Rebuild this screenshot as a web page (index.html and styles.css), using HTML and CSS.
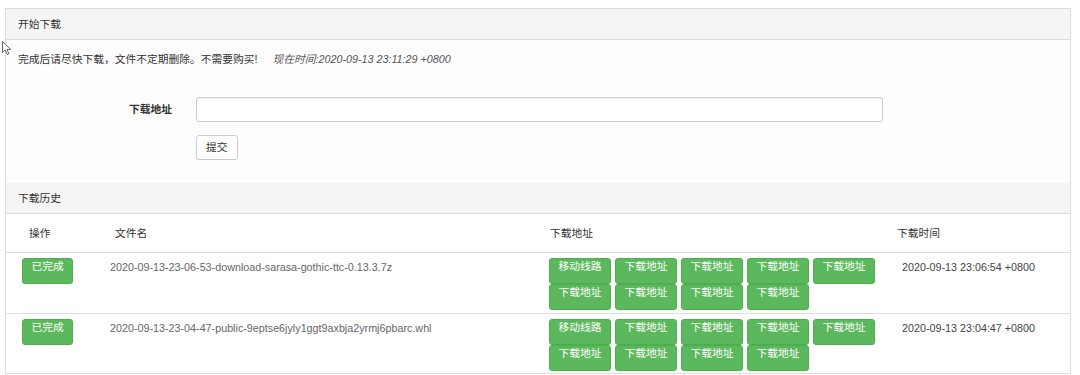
FILE: index.html
```html
<!DOCTYPE html>
<html lang="zh-CN">
<head>
<meta charset="utf-8">
<title>开始下载</title>
<link rel="stylesheet" href="styles.css">
</head>
<body>
<div class="panel">
  <div class="panel-heading">开始下载</div>
  <div class="panel-body">
    <p class="notice">完成后请尽快下载，文件不定期删除。不需要购买!<em class="now">现在时间:2020-09-13 23:11:29 +0800</em></p>
    <form class="form">
      <label class="form-label" for="url">下载地址</label>
      <input class="form-input" id="url" type="text">
      <button class="btn btn-default form-submit" type="button">提交</button>
    </form>
  </div>
  <div class="panel-heading panel-heading-sub">下载历史</div>
  <table class="history">
    <colgroup>
      <col class="c-op"><col class="c-name"><col class="c-links"><col class="c-time">
    </colgroup>
    <thead>
      <tr>
        <th class="th-op">操作</th>
        <th class="th-name">文件名</th>
        <th class="th-links">下载地址</th>
        <th class="th-time">下载时间</th>
      </tr>
    </thead>
    <tbody>
      <tr>
        <td class="td-op"><span class="btn btn-success">已完成</span></td>
        <td class="td-name">2020-09-13-23-06-53-download-sarasa-gothic-ttc-0.13.3.7z</td>
        <td class="td-links">
          <div class="links">
            <a class="btn btn-success">移动线路</a><a class="btn btn-success">下载地址</a><a class="btn btn-success">下载地址</a><a class="btn btn-success">下载地址</a><a class="btn btn-success">下载地址</a><a class="btn btn-success">下载地址</a><a class="btn btn-success">下载地址</a><a class="btn btn-success">下载地址</a><a class="btn btn-success">下载地址</a>
          </div>
        </td>
        <td class="td-time">2020-09-13 23:06:54 +0800</td>
      </tr>
      <tr class="last">
        <td class="td-op"><span class="btn btn-success">已完成</span></td>
        <td class="td-name">2020-09-13-23-04-47-public-9eptse6jyly1ggt9axbja2yrmj6pbarc.whl</td>
        <td class="td-links">
          <div class="links">
            <a class="btn btn-success">移动线路</a><a class="btn btn-success">下载地址</a><a class="btn btn-success">下载地址</a><a class="btn btn-success">下载地址</a><a class="btn btn-success">下载地址</a><a class="btn btn-success">下载地址</a><a class="btn btn-success">下载地址</a><a class="btn btn-success">下载地址</a><a class="btn btn-success">下载地址</a>
          </div>
        </td>
        <td class="td-time">2020-09-13 23:04:47 +0800</td>
      </tr>
    </tbody>
  </table>
</div>
<svg class="cursor" width="10" height="15" viewBox="0 0 10 15" aria-hidden="true">
  <path d="M0.5 0.5 L0.5 11.5 L3.2 9 L5.2 13.6 L6.9 12.9 L5 8.4 L8.8 8.4 Z" fill="#fff" stroke="#555" stroke-width="0.9" stroke-linejoin="round"/>
</svg>
</body>
</html>
```

FILE: styles.css
```css
* { box-sizing: border-box; }

html, body {
  margin: 0;
  background: #fff;
}

body {
  padding: 8px 0 0 5px;
  font-family: "Liberation Sans", "Noto Sans CJK SC", sans-serif;
  font-size: 10.75px;
  line-height: 15px;
  color: #333;
  position: relative;
  height: 375px;
  overflow: hidden;
}

.panel {
  width: 1066px;
  border: 1px solid #ddd;
  border-bottom: none;
  background: #fff;
}

.panel-heading {
  height: 31px;
  padding: 7.5px 12px;
  background: #f5f5f5;
  border-bottom: 1px solid #ddd;
  color: #333;
}

.panel-body {
  height: 143px;
  padding: 12px 12px 0;
  background: #fdfdfd;
}

.notice {
  margin: 0;
  line-height: 15px;
  color: #333;
}

.now {
  margin-left: 15px;
  color: #555;
}

.form {
  margin-top: 30px;
  display: grid;
  grid-template-columns: 154px 687px;
  column-gap: 24px;
  row-gap: 13px;
  align-items: center;
}

.form-label {
  text-align: right;
  font-weight: bold;
  color: #333;
}

.form-input {
  height: 25px;
  border: 1px solid #ccc;
  border-radius: 3px;
  background: #fff;
  box-shadow: inset 0 1px 1px rgba(0,0,0,0.06);
  font: inherit;
  padding: 0 9px;
}

.form-submit {
  grid-column: 2;
  justify-self: start;
}

.btn {
  display: inline-block;
  height: 26px;
  line-height: 24px;
  padding: 0 8.5px;
  border: 1px solid transparent;
  border-radius: 3px;
  font: inherit;
  font-size: 10.75px;
  white-space: nowrap;
  text-align: center;
  cursor: pointer;
}

.btn-default {
  height: 25px;
  line-height: 23px;
  padding: 0 9px;
  background: #fff;
  border-color: #ccc;
  color: #333;
}

.btn-success {
  background: #5cb85c;
  border-color: #4cae4c;
  color: #fff;
}

.history {
  width: 1064px;
  border-collapse: collapse;
  table-layout: fixed;
}

.c-op { width: 98px; }
.c-name { width: 439px; }
.c-links { width: 348px; }
.c-time { width: 179px; }

.history th {
  font-weight: normal;
  text-align: left;
  padding: 12px 0 11px;
  line-height: 15px;
  border-bottom: 1px solid #ddd;
  color: #333;
}

.history th.th-op { padding-left: 23px; }
.history th.th-name { padding-left: 11px; }
.history th.th-links { padding-left: 7px; }
.history th.th-time { padding-left: 6px; }

.history td {
  vertical-align: top;
  border-bottom: 1px solid #ddd;
}

.history tr td { height: 61px; }
.history tr.last td { height: 60px; }

.td-op { padding: 5px 0 0 16px; }

.td-name {
  padding: 7px 6px 0;
  color: #666;
  white-space: nowrap;
}

.td-links { padding: 5px 6px 0; }

.links {
  display: flex;
  flex-wrap: wrap;
  column-gap: 4px;
  row-gap: 0;
}

.td-time {
  padding: 7px 11px 0;
  color: #444;
  white-space: nowrap;
}

.cursor {
  position: absolute;
  left: 2px;
  top: 41px;
}
```
